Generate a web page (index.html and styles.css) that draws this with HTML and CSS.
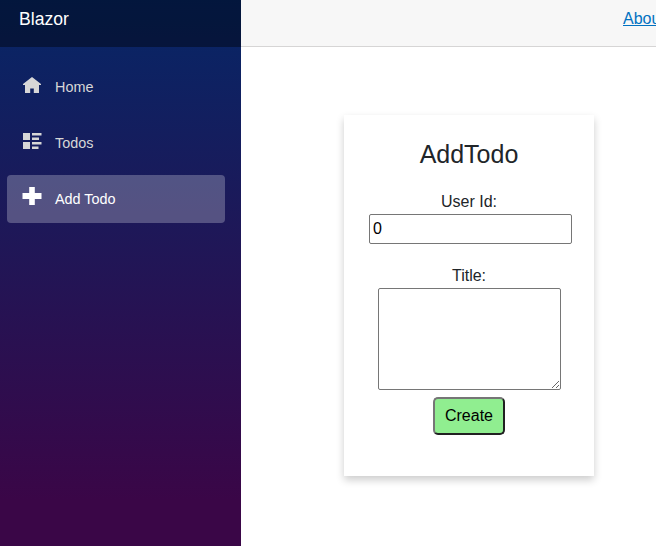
FILE: index.html
```html
<!DOCTYPE html>
<html lang="en">
<head>
<meta charset="utf-8">
<title>AddTodo</title>
<link rel="stylesheet" href="styles.css">
</head>
<body>
<div class="page">
  <aside class="sidebar">
    <div class="brand">Blazor</div>
    <nav class="nav">
      <a class="nav-link">
        <svg class="icon" viewBox="0 0 20 20"><path d="M10 1 1 8v1h2v8h5.200v-4.500h3.600V17H17V9h2V8z"/></svg>
        <span>Home</span>
      </a>
      <a class="nav-link">
        <svg class="icon" viewBox="0 0 20 20"><path d="M1 1h7v7H1zM1 10h7v7H1zM10 1h9.500v2.500H10zM10 5.500h7V8h-7zM10 10h9.500v2.500H10zM10 14.500h6.500V17H10z"/></svg>
        <span>Todos</span>
      </a>
      <a class="nav-link active">
        <svg class="icon" viewBox="0 0 20 20"><path d="M7.200-1h5.600v6h6.700v6h-6.700v6H7.200v-6H.500V5h6.700z"/></svg>
        <span>Add Todo</span>
      </a>
    </nav>
  </aside>
  <main class="main">
    <header class="top-row"><a class="about" href="#">About</a></header>
    <form class="card">
      <h3 class="title">AddTodo</h3>
      <label class="label" for="user">User Id:</label>
      <input class="user" id="user" type="text" value="0">
      <label class="label" for="todo">Title:</label>
      <textarea class="todo" id="todo"></textarea>
      <button class="create" type="button">Create</button>
    </form>
  </main>
</div>
</body>
</html>
```
FILE: styles.css
```css
* { box-sizing: border-box; }
body {
  margin: 0;
  font: 16px/24px "Liberation Sans", Arial, sans-serif;
  color: #212529;
  overflow: hidden;
}
.page { display: flex; height: 546px; }
.sidebar {
  flex: 0 0 241px;
  background: linear-gradient(180deg, rgb(5, 39, 103) -9px, #3a0647 500px);
}
.brand {
  height: 47px;
  padding: 6px 19px 0;
  font-size: 17.6px;
  line-height: 27px;
  color: #fff;
  background: rgba(0, 0, 0, 0.4);
}
.nav {
  display: flex;
  flex-direction: column;
  gap: 8px;
  padding: 16px 16px 0 7px;
}
.nav-link {
  display: flex;
  align-items: center;
  height: 48px;
  padding-left: 15px;
  border-radius: 4px;
  font-size: 14.4px;
  color: #d7d7d7;
}
.icon {
  width: 20px;
  height: 20px;
  margin: -2px 13px 0 0;
  fill: currentColor;
  overflow: visible;
}
.active { background: rgba(255, 255, 255, 0.25); color: #fff; }
.main { flex: 1; min-width: 0; background: #fff; }
.top-row {
  height: 47px;
  padding: 7px 0 0 382px;
  background: #f7f7f7;
  border-bottom: 1px solid #d6d5d5;
  overflow: hidden;
}
.about { color: #0071c1; }
.card {
  display: flex;
  flex-direction: column;
  align-items: center;
  width: 250px;
  height: 361px;
  margin: 68px 0 0 103px;
  padding: 25px;
  box-shadow: 0 4px 8px rgba(0, 0, 0, 0.2);
}
.title {
  margin: 0 0 20px;
  font-size: 25px;
  font-weight: 400;
  line-height: 29px;
}
.label { height: 25px; padding-top: 1px; }
.user,
.todo {
  flex-shrink: 0;
  border: 1px solid #767676;
  border-radius: 2px;
}
.user {
  align-self: flex-start;
  width: 203px;
  height: 30px;
  margin-bottom: 19px;
  padding: 1px 3px;
  font: inherit;
  color: #000;
}
.todo {
  width: 183px;
  height: 102px;
  margin: 0 0 7px 1px;
  resize: both;
}
.create {
  width: 72px;
  height: 38px;
  padding: 0;
  border: 2px solid;
  border-color: #767676 #212121 #212121 #767676;
  border-radius: 5px;
  background: lightgreen;
  font: inherit;
  color: #000;
}
```
